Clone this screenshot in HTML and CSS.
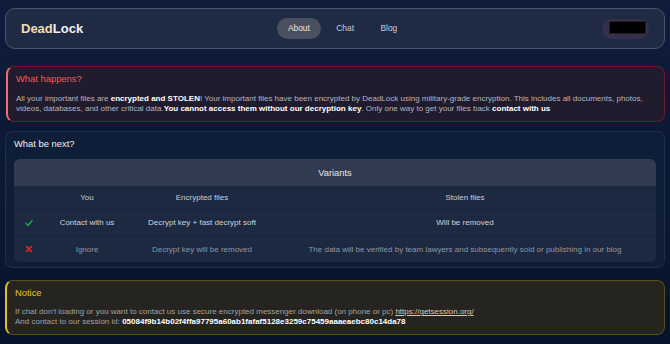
FILE: index.html
```html
<!DOCTYPE html>
<html>
<head>
<meta charset="utf-8">
<link rel="stylesheet" href="styles.css">
</head>
<body>
<div class="page">
  <header class="topbar">
    <div class="logo"><span class="logo-a">Dead</span><span class="logo-b">Lock</span></div>
    <nav class="nav">
      <a class="nav-link active">About</a>
      <a class="nav-link">Chat</a>
      <a class="nav-link">Blog</a>
    </nav>
    <div class="lang"><span class="lang-box"></span></div>
  </header>

  <section class="card card-danger">
    <h2 class="card-title title-danger">What happens?</h2>
    <p class="card-text">All your important files are <b>encrypted and STOLEN</b>! Your important files have been encrypted by DeadLock using military-grade encryption. This includes all documents, photos, videos, databases, and other critical data.<b>You cannot access them without our decryption key</b>. Only one way to get your files back <b>contact with us</b></p>
  </section>

  <section class="card card-plain">
    <h2 class="card-title title-plain">What be next?</h2>
    <table class="variants">
      <colgroup>
        <col class="c-icon">
        <col class="c-you">
        <col class="c-enc">
        <col class="c-stolen">
      </colgroup>
      <thead>
        <tr><th colspan="4" class="variants-head">Variants</th></tr>
      </thead>
      <tbody>
        <tr class="sub-row">
          <td></td>
          <td>You</td>
          <td>Encrypted files</td>
          <td>Stolen files</td>
        </tr>
        <tr class="row-good">
          <td><svg class="ico" viewBox="0 0 10 10"><path d="M1.2 5.4 L3.8 8 L8.8 2" fill="none" stroke="#1fa33a" stroke-width="1.9" stroke-linecap="round" stroke-linejoin="round"/></svg></td>
          <td>Contact with us</td>
          <td>Decrypt key + fast decrypt soft</td>
          <td>Will be removed</td>
        </tr>
        <tr class="row-bad">
          <td><svg class="ico" viewBox="0 0 10 10"><path d="M2 2 L8 8 M8 2 L2 8" fill="none" stroke="#e0202a" stroke-width="2.1" stroke-linecap="round"/></svg></td>
          <td>Ignore</td>
          <td>Decrypt key will be removed</td>
          <td>The data will be verified by team lawyers and subsequently sold or publishing in our blog</td>
        </tr>
      </tbody>
    </table>
  </section>

  <section class="card card-notice">
    <h2 class="card-title title-notice">Notice</h2>
    <p class="card-text notice-text">If chat don't loading or you want to contact us use secure encrypted messenger download (on phone or pc) <a class="link">https://getsession.org/</a><br>And contact to our session id: <b>05084f9b14b02f4ffa97795a60ab1fafaf5128e3259c75459aaaeaebc80c14da78</b></p>
  </section>
</div>
</body>
</html>
```

FILE: styles.css
```css
* { box-sizing: border-box; }
html, body { margin: 0; padding: 0; }
body {
  width: 670px;
  height: 344px;
  overflow: hidden;
  font-family: "Liberation Sans", Arial, sans-serif;
  background: linear-gradient(180deg, #0f1c3c 0%, #0b1831 60%, #07132a 100%);
  color: #e5e7eb;
}
.page {
  display: flex;
  flex-direction: column;
  padding: 8px 5px 0 5px;
}
.topbar {
  display: flex;
  align-items: center;
  justify-content: space-between;
  height: 41px;
  padding: 0 15px 0 15px;
  background: #1f2a44;
  border: 1px solid #4c5568;
  border-radius: 10px;
  margin-bottom: 17px;
}
.logo {
  font-size: 13px;
  font-weight: 700;
}
.logo-a { color: #f2dcb4; }
.logo-b { color: #f1f2f4; }
.nav {
  display: flex;
  gap: 4.5px;
}
.nav-link {
  display: block;
  height: 21px;
  line-height: 21px;
  padding: 0 11px;
  font-size: 8.4px;
  color: #c9ced8;
  border-radius: 11px;
}
.nav-link.active {
  background: #4a5060;
  color: #f1e8d8;
}
.lang {
  display: flex;
  padding: 2px 3px 5px 7px;
  background: #352f4c;
  border-radius: 10px;
}
.lang-box {
  display: block;
  width: 37px;
  height: 13px;
  background: #000;
  border: 1px solid #222;
}
.card {
  border-radius: 8px;
  padding: 6px 8px 7px 8px;
}
.card-title {
  margin: 0;
  font-size: 9.4px;
  line-height: 12px;
  font-weight: 400;
}
.card-text {
  margin: 9px 0 0 0;
  font-size: 8px;
  line-height: 10px;
  color: #b3b6be;
}
.card-text b { color: #ffffff; font-weight: 700; }
.card-danger {
  margin-left: 1px;
  background: #211b2e;
  border: 1px solid #6d1b2b;
  border-left: 2px solid #f26d6d;
  margin-bottom: 9px;
}
.title-danger { color: #ef5b5b; }
.card-plain {
  background: #0e1d38;
  border: 1px solid #1f2f4d;
  padding: 6px 8px 5px 8px;
  margin-bottom: 11.5px;
}
.title-plain { color: #f1f3f6; }
.variants {
  width: 100%;
  margin-top: 9px;
  border-collapse: separate;
  border-spacing: 0;
  font-size: 8px;
  text-align: center;
  border-radius: 6px;
  overflow: hidden;
  background: #1d2940;
  table-layout: fixed;
}
.variants th, .variants td { padding: 0; white-space: nowrap; }
.variants-head {
  height: 27px;
  background: #323c50;
  font-size: 9.3px;
  font-weight: 400;
  color: #e3e7ee;
}
.sub-row td {
  height: 24px;
  color: #c9ced7;
  border-bottom: 1px solid #16213a;
}
.row-good td {
  height: 26px;
  color: #cfd3da;
  border-bottom: 1px solid #16213a;
}
.row-bad td {
  height: 26px;
  color: #8f96a3;
}
col.c-icon { width: 30px; }
col.c-you { width: 86px; }
col.c-enc { width: 144px; }
col.c-stolen { width: auto; }
.ico {
  width: 8px;
  height: 8px;
  display: inline-block;
  vertical-align: middle;
}
.card-notice {
  background: #252420;
  border: 1px solid #5b5019;
  border-left: 2px solid #e6c218;
  padding: 6px 8px 7px 8px;
}
.title-notice { color: #e9c31a; }
.notice-text {
  margin-top: 8.5px;
  color: #a3a3a3;
}
.link {
  color: #d6ccb5;
  text-decoration: underline;
}
```
